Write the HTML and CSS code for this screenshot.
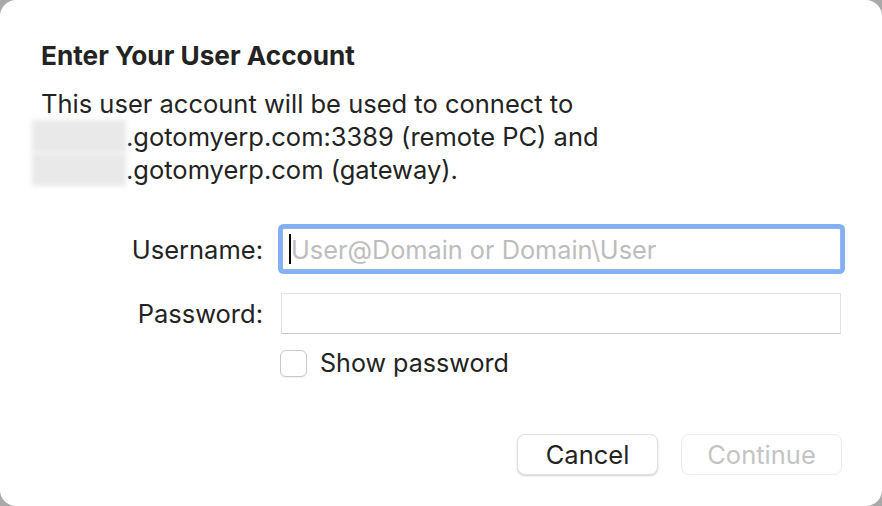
FILE: index.html
```html
<!DOCTYPE html>
<html>
<head>
<meta charset="utf-8">
<link rel="stylesheet" href="styles.css">
</head>
<body>
<div class="dialog">
  <h1 class="title">Enter Your User Account</h1>
  <p class="message">This user account will be used to connect to<br><span class="redact"></span>.gotomyerp.com:3389 (remote PC) and<br><span class="redact"></span>.gotomyerp.com (gateway).</p>
  <div class="form">
    <label class="label">Username:</label>
    <div class="field focus"><span class="caret"></span><span class="placeholder">User@Domain or Domain\User</span></div>
    <label class="label pw">Password:</label>
    <div class="field plain pw"></div>
    <div></div>
    <div class="check-row"><span class="checkbox"></span><span class="check-label">Show password</span></div>
  </div>
  <div class="buttons">
    <button class="btn cancel">Cancel</button>
    <button class="btn disabled">Continue</button>
  </div>
</div>
</body>
</html>
```

FILE: styles.css
```css
html, body {
  margin: 0;
  padding: 0;
  background: #a9a9a9;
}
body {
  width: 882px;
  height: 506px;
  overflow: hidden;
  font-family: "Inter", "Liberation Sans", sans-serif;
  color: #232323;
}
.dialog {
  box-sizing: border-box;
  width: 882px;
  height: 506px;
  background: #ffffff;
  border-radius: 16px;
  padding: 40px 40px 0 41px;
  display: flex;
  flex-direction: column;
}
.title {
  margin: 0;
  font-size: 26.2px;
  font-weight: 700;
  line-height: 32px;
  color: #232323;
}
.message {
  margin: 15px 0 0 0;
  font-size: 25.5px;
  line-height: 33px;
  color: #232323;
}
.redact {
  display: inline-block;
  width: 94px;
  height: 33px;
  margin-left: -9px;
  vertical-align: top;
  background: #e9e9e9;
  filter: blur(2.5px);
}
.form {
  margin-top: 42px;
  display: grid;
  grid-template-columns: 222px 560px;
  column-gap: 18px;
  align-items: center;
}
.label {
  text-align: right;
  font-size: 25.5px;
  line-height: 41px;
  color: #232323;
}
.field {
  box-sizing: border-box;
  height: 41px;
  background: #ffffff;
  display: flex;
  align-items: center;
}
.field.focus {
  height: 42px;
  margin-left: 1px;
  border: 1px solid #9ab6e6;
  box-shadow: 0 0 0 4px #82b0f6;
  border-radius: 2px;
  padding-left: 6px;
}
.field.plain {
  border: 1px solid #e2e2e2;
  border-bottom-color: #c9c9c9;
}
.pw {
  margin-top: 23px;
}
.caret {
  width: 2px;
  height: 30px;
  background: #000000;
}
.placeholder {
  font-size: 25.3px;
  color: #bdbdbd;
}
.check-row {
  margin-top: 16px;
  display: flex;
  align-items: center;
  margin-left: -1px;
}
.checkbox {
  box-sizing: border-box;
  width: 27px;
  height: 27px;
  border: 1px solid #c9c9c9;
  border-radius: 6px;
  background: #ffffff;
  box-shadow: 0 1px 1px rgba(0,0,0,0.06);
}
.check-label {
  margin-left: 13px;
  font-size: 25.1px;
  line-height: 27px;
  color: #232323;
}
.buttons {
  margin-top: 57px;
  display: flex;
  justify-content: flex-end;
  gap: 23px;
}
.btn {
  box-sizing: border-box;
  height: 41px;
  border-radius: 8px;
  font-family: "Inter", "Liberation Sans", sans-serif;
  font-size: 25.5px;
  background: #ffffff;
  padding: 0;
}
.btn.cancel {
  width: 141px;
  color: #232323;
  border: 1px solid #e0e0e0;
  box-shadow: 0 1px 2px rgba(0,0,0,0.18);
}
.btn.disabled {
  width: 161px;
  color: #c4c4c4;
  border: 1px solid #ececec;
}
```
